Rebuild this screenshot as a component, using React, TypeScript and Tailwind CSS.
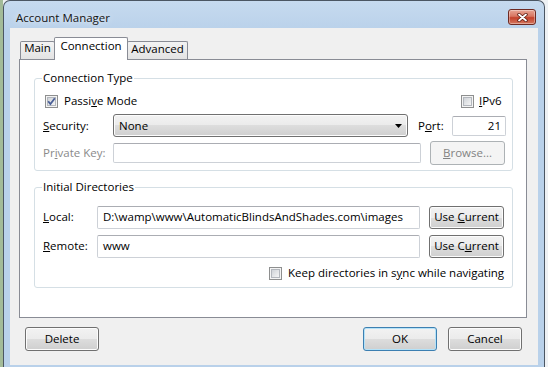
import React from "react";

const btn =
  "flex items-center justify-center rounded-[3px] border border-[#707070] bg-[linear-gradient(#f2f2f2_0%,#ebebeb_50%,#dddddd_50%,#cfcfcf_100%)] shadow-[inset_0_0_0_1px_#fcfcfc] text-black";

const input =
  "flex items-center bg-white border border-[#cdd1d7] border-t-[#abadb3] rounded-[2px]";

function CheckBox({ checked }: { checked?: boolean }) {
  return (
    <svg width="13" height="13" viewBox="0 0 13 13" className="shrink-0">
      <defs>
        <linearGradient id="cbg" x1="0" y1="0" x2="1" y2="1">
          <stop offset="0" stopColor="#cdd1d6" />
          <stop offset="1" stopColor="#f7f7f7" />
        </linearGradient>
      </defs>
      <rect x="0.5" y="0.5" width="12" height="12" fill="#f4f4f4" stroke="#8e8f8f" />
      <rect x="2.5" y="2.5" width="8" height="8" fill="url(#cbg)" stroke="#b3b7bd" />
      {checked && (
        <path d="M3.2 6.2 L5.4 9 L9.8 3.2" stroke="#4a5f97" strokeWidth="1.8" fill="none" />
      )}
    </svg>
  );
}

export default function App() {
  return (
    <div className="w-[548px] h-[367px] overflow-hidden flex bg-[#eef1f4] [font-family:'Open_Sans',sans-serif] text-[11.5px] leading-[16px] text-black">
      <div className="w-[3px] h-full bg-[#a3bb98]" />
      <div className="w-[542px] h-[367px] flex flex-col border-x border-t border-[#4b5663] rounded-t-[7px] bg-[linear-gradient(#c6daef_0px,#b9d1ea_30px,#b9d1ea_100%)]">
        {/* title bar */}
        <div className="h-[27px] flex items-start justify-between pl-[12px] pr-[8px]">
          <span className="mt-[9px] text-[#141414] [text-shadow:0_0_6px_rgba(255,255,255,0.9)]">
            Account Manager
          </span>
          <div className="mt-[8px] w-[28px] h-[16px] rounded-[3px] border border-[#6e2a22] bg-[linear-gradient(#e8a595_0%,#d87560_45%,#c3412b_55%,#d4775f_100%)] shadow-[inset_0_0_0_1px_rgba(255,255,255,0.35)] flex items-center justify-center">
            <svg width="11" height="9" viewBox="0 0 11 9">
              <path d="M2 1.5 L9 7.5 M9 1.5 L2 7.5" stroke="#5a1a10" strokeWidth="3.4" strokeLinecap="round" />
              <path d="M2 1.5 L9 7.5 M9 1.5 L2 7.5" stroke="#ffffff" strokeWidth="1.8" strokeLinecap="round" />
            </svg>
          </div>
        </div>

        {/* client area */}
        <div className="flex-1 mx-[6px] mb-[2px] bg-[#f0f0f0] flex flex-col pt-[9px]">
          {/* tabs */}
          <div className="flex items-end h-[22px] ml-[10px]">
            <div className="w-[35px] h-[18px] border border-b-0 border-[#898c95] rounded-t-[2px] bg-[linear-gradient(#f3f3f3,#e3e3e3)] flex justify-center pt-[0px] leading-[12px]">
              Main
            </div>
            <div className="-ml-px relative z-10 w-[74px] h-[23px] -mb-px border border-b-0 border-[#898c95] rounded-t-[2px] bg-white flex justify-center pt-[2px] leading-[12px]">
              Connection
            </div>
            <div className="-ml-px w-[61px] h-[18px] border border-b-0 border-[#898c95] rounded-t-[2px] bg-[linear-gradient(#f3f3f3,#e3e3e3)] flex justify-center pt-[1px] leading-[12px]">
              Advanced
            </div>
          </div>

          {/* panel */}
          <div className="ml-[9px] w-[508px] h-[259px] border border-[#898c95] bg-white flex flex-col pt-[10px]">
            <fieldset className="ml-[14px] w-[479px] border border-[#d5dfe5] rounded-[3px] pl-[8px] pb-[5px]">
              <legend className="-ml-px px-px">Connection Type</legend>
              <div className="h-[20px] mt-[5px] flex items-center">
                <div className="w-[416px] flex items-center">
                  <span className="ml-[2px]"><CheckBox checked /></span>
                  <span className="ml-[6px]">
                    Passi<u>v</u>e Mode
                  </span>
                </div>
                <span className="ml-[2px]"><CheckBox /></span>
                <span className="ml-[5px]">
                  <u>I</u>Pv6
                </span>
              </div>
              <div className="h-[23px] mt-[3px] flex items-center">
                <span className="w-[70px]">
                  <u>S</u>ecurity:
                </span>
                <div className="w-[295px] h-[23px] rounded-[3px] border border-[#707070] bg-[linear-gradient(#f2f2f2_0%,#ebebeb_50%,#dddddd_50%,#cfcfcf_100%)] shadow-[inset_0_0_0_1px_#fcfcfc] flex items-center justify-between pl-[5px] pr-[5px]">
                  <span>None</span>
                  <svg width="7" height="4" viewBox="0 0 7 4">
                    <path d="M0 0 H7 L3.5 4 Z" fill="#000" />
                  </svg>
                </div>
                <span className="ml-[10px] w-[34px]">
                  P<u>o</u>rt:
                </span>
                <div className={`${input} w-[54px] h-[20px] justify-end pr-[4px]`}>21</div>
              </div>
              <div className="h-[24px] mt-[4px] flex items-center">
                <span className="w-[70px] text-[#8a8a8a]">
                  Pr<u>i</u>vate Key:
                </span>
                <div className={`${input} w-[308px] h-[20px]`} />
                <div className="ml-[9px] w-[75px] h-[24px] rounded-[3px] border border-[#adb2b5] bg-[#f4f4f4] flex items-center justify-center text-[#838383]">
                  <span>
                    <u>B</u>rowse...
                  </span>
                </div>
              </div>
            </fieldset>

            <fieldset className="mt-[8px] ml-[14px] w-[479px] border border-[#d5dfe5] rounded-[3px] pl-[8px] pb-[6px]">
              <legend className="-ml-px px-px">Initial Directories</legend>
              <div className="h-[24px] mt-[10px] flex items-center">
                <span className="w-[54px]">
                  <u>L</u>ocal:
                </span>
                <div className={`${input} w-[323px] h-[23px] pl-[5px]`}>
                  {"D:\\wamp\\www\\AutomaticBlindsAndShades.com\\images"}
                </div>
                <div className={`${btn} ml-[9px] w-[75px] h-[23px]`}>
                  <span>
                    Use <u>C</u>urrent
                  </span>
                </div>
              </div>
              <div className="h-[24px] mt-[5px] flex items-center">
                <span className="w-[54px]">
                  <u>R</u>emote:
                </span>
                <div className={`${input} w-[323px] h-[23px] pl-[5px]`}>www</div>
                <div className={`${btn} ml-[9px] w-[75px] h-[23px]`}>
                  <span>
                    Use C<u>u</u>rrent
                  </span>
                </div>
              </div>
              <div className="h-[16px] mt-[7px] flex items-center pl-[226px]">
                <CheckBox />
                <span className="ml-[6px]">
                  Keep directories in s<u>y</u>nc while navigating
                </span>
              </div>
            </fieldset>
          </div>

          {/* bottom buttons */}
          <div className="mt-[9px] flex items-center pl-[15px] pr-[16px]">
            <div className={`${btn} w-[74px] h-[24px]`}>Delete</div>
            <div className="ml-auto w-[74px] h-[24px] rounded-[3px] border border-[#3c7fb1] bg-[linear-gradient(#f2f2f2_0%,#ebebeb_50%,#dddddd_50%,#cfcfcf_100%)] shadow-[inset_0_0_0_1px_#b4e2f8] flex items-center justify-center">
              OK
            </div>
            <div className={`${btn} ml-[11px] w-[74px] h-[24px]`}>Cancel</div>
          </div>
        </div>
      </div>
      <div className="w-[3px] h-full bg-[#eef1f4]" />
    </div>
  );
}
